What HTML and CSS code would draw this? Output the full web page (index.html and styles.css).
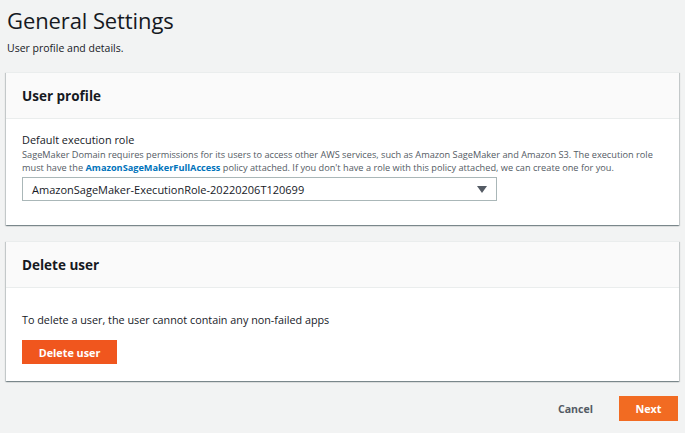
FILE: index.html
```html
<!DOCTYPE html>
<html>
<head>
<meta charset="utf-8">
<link rel="stylesheet" href="styles.css">
</head>
<body>
<div class="page">
  <header class="page-head">
    <h1 class="title">General Settings</h1>
    <p class="subtitle">User profile and details.</p>
  </header>

  <section class="card card-profile">
    <div class="card-head"><h2>User profile</h2></div>
    <div class="card-body">
      <div class="label">Default execution role</div>
      <p class="desc">SageMaker Domain requires permissions for its users to access other AWS services, such as Amazon SageMaker and Amazon S3. The execution role must have the <a class="link">AmazonSageMakerFullAccess</a> policy attached. If you don't have a role with this policy attached, we can create one for you.</p>
      <div class="select">
        <span class="select-value">AmazonSageMaker-ExecutionRole-20220206T120699</span>
        <svg class="caret" width="10" height="7" viewBox="0 0 10 7"><path d="M0 0 H10 L5 7 Z" fill="#545b64"/></svg>
      </div>
    </div>
  </section>

  <section class="card card-delete">
    <div class="card-head"><h2>Delete user</h2></div>
    <div class="card-body">
      <p class="note">To delete a user, the user cannot contain any non-failed apps</p>
      <button class="btn btn-delete">Delete user</button>
    </div>
  </section>

  <footer class="actions">
    <button class="btn-link">Cancel</button>
    <button class="btn btn-next">Next</button>
  </footer>
</div>
</body>
</html>
```

FILE: styles.css
```css
html, body {
  margin: 0;
  padding: 0;
  background: #f2f3f3;
}
body {
  font-family: "Open Sans", "Noto Sans", sans-serif;
  color: #16191f;
}
.page {
  padding: 0 6px 0 6px;
  display: flex;
  flex-direction: column;
}
.page-head {
  padding: 6px 1px 0;
}
.title {
  margin: 0;
  font-size: 22px;
  line-height: 28px;
  font-weight: 400;
  letter-spacing: -0.1px;
}
.subtitle {
  margin: 6px 0 0;
  font-size: 10.5px;
  line-height: 16px;
}
.card {
  background: #fff;
  border-top: 1px solid #eaeded;
  box-shadow: 0 1px 1px 0 rgba(0,28,36,.3), 1px 1px 1px 0 rgba(0,28,36,.15), -1px 1px 1px 0 rgba(0,28,36,.15);
}
.card-profile { margin-top: 16px; }
.card-delete { margin-top: 16px; }
.card-head {
  background: #fafafa;
  border-bottom: 1px solid #eaeded;
  height: 45px;
  padding: 0 16px;
  display: flex;
  align-items: center;
}
.card-head h2 {
  margin: 0;
  font-size: 13.5px;
  font-weight: 700;
}
.card-body {
  padding: 13px 16px 24px;
}
.label {
  font-size: 10.9px;
  line-height: 16px;
}
.desc {
  margin: 0;
  font-size: 9.2px;
  line-height: 13px;
  color: #545b64;
}
.link {
  color: #0073bb;
  font-weight: 700;
}
.select {
  margin-top: 3px;
  width: 475px;
  height: 24px;
  box-sizing: border-box;
  border: 1px solid #aab7b8;
  display: flex;
  align-items: center;
  justify-content: space-between;
  padding: 0 9px 0 9px;
}
.select-value {
  font-size: 11px;
}
.card-delete .card-body {
  padding: 24px 16px 17px;
}
.note {
  margin: 0;
  font-size: 10.8px;
  line-height: 16px;
}
.btn {
  border: none;
  color: #fff;
  font-family: inherit;
  font-weight: 700;
  font-size: 10.8px;
  padding: 0;
  display: flex;
  align-items: center;
  justify-content: center;
}
.btn-delete {
  margin-top: 12px;
  width: 95px;
  height: 24px;
  background: #f0561e;
}
.actions {
  margin-top: 15px;
  display: flex;
  justify-content: flex-end;
  align-items: center;
  gap: 26px;
  padding-right: 1px;
}
.btn-link {
  background: none;
  border: none;
  font-family: inherit;
  font-weight: 700;
  font-size: 10.6px;
  color: #545b64;
  padding: 0;
}
.btn-next {
  width: 59px;
  height: 25px;
  background: #f26b22;
}
```
